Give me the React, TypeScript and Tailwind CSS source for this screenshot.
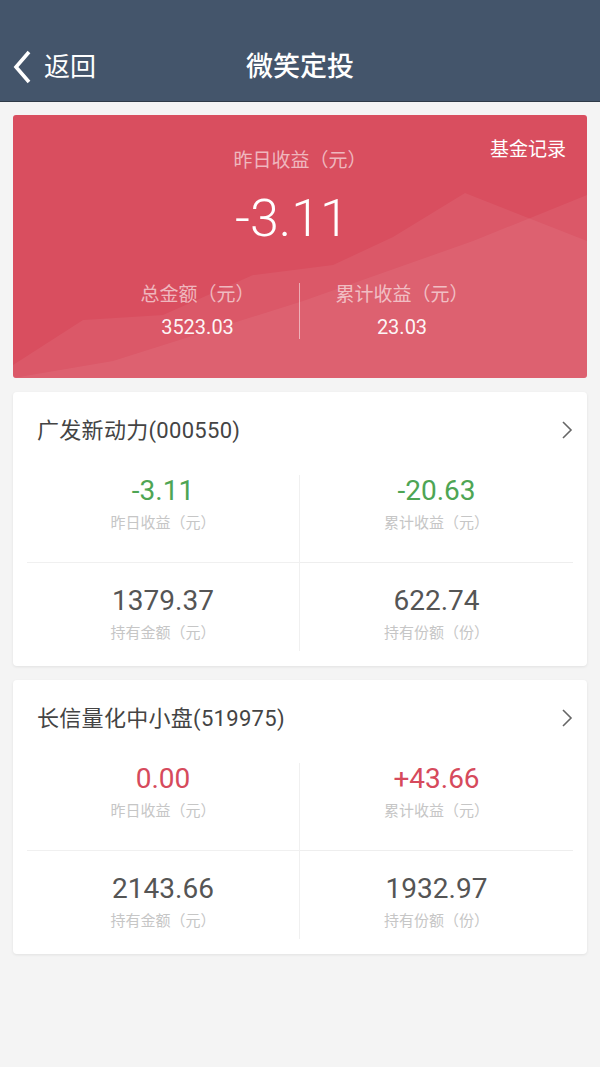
import React from "react";

const font = { fontFamily: '"Roboto", "Noto Sans CJK SC", sans-serif' };

type Cell = { value: string; label: string; color: string };

const funds: { name: string; cells: Cell[] }[] = [
  {
    name: "广发新动力(000550)",
    cells: [
      { value: "-3.11", label: "昨日收益（元）", color: "text-[#4ea554]" },
      { value: "-20.63", label: "累计收益（元）", color: "text-[#4ea554]" },
      { value: "1379.37", label: "持有金额（元）", color: "text-[#555555]" },
      { value: "622.74", label: "持有份额（份）", color: "text-[#555555]" },
    ],
  },
  {
    name: "长信量化中小盘(519975)",
    cells: [
      { value: "0.00", label: "昨日收益（元）", color: "text-[#d64a5c]" },
      { value: "+43.66", label: "累计收益（元）", color: "text-[#d64a5c]" },
      { value: "2143.66", label: "持有金额（元）", color: "text-[#555555]" },
      { value: "1932.97", label: "持有份额（份）", color: "text-[#555555]" },
    ],
  },
];

const FundCard = ({ name, cells }: { name: string; cells: Cell[] }) => (
  <div className="mx-[13px] rounded-[4px] bg-white pb-[15px] shadow-[0_1px_3px_rgba(0,0,0,0.08)]">
    {/* Title */}
    <div className="flex h-[83px] items-center justify-between pb-[7px] pl-[24px] pr-[14px]">
      <span className="text-[22px] tracking-[0.3px] text-[#444444]">{name}</span>
      <svg width="12" height="20" viewBox="0 0 12 20" fill="none">
        <path d="M2 2l8 8-8 8" stroke="#666666" strokeWidth="1.6" />
      </svg>
    </div>

    {/* Grid */}
    <div className="mx-[14px] grid grid-cols-2">
      {cells.map((c, i) => (
        <div
          key={i}
          className={`flex h-[88px] flex-col items-center ${i % 2 === 0 ? "border-r border-[#f0f0f0]" : ""} ${
            i < 2 ? "border-b border-[#eeeeee] pt-0" : "pt-[22px]"
          }`}
        >
          <span className={`text-[28px] leading-[32px] ${c.color}`}>{c.value}</span>
          <span className="mt-[6px] text-[15px] leading-[20px] text-[#c6c6c6]">{c.label}</span>
        </div>
      ))}
    </div>
  </div>
);

export default function App() {
  return (
    <div className="min-h-screen bg-[#f4f4f4]" style={font}>
      {/* Header */}
      <header className="h-[102px] border-b border-[#2f3a48] bg-[#44556b] pt-[45px]">
        <div className="relative flex h-[44px] items-center justify-center">
          <div className="absolute left-[13px] flex items-center">
            <svg width="20" height="34" viewBox="0 0 20 34" fill="none">
              <path d="M16 2L3 17l13 15" stroke="white" strokeWidth="3.6" />
            </svg>
            <span className="ml-[11px] text-[26px] text-white">返回</span>
          </div>
          <span className="text-[27px] font-medium text-white">微笑定投</span>
        </div>
      </header>

      {/* Summary card */}
      <div className="relative mx-[13px] mt-[13px] h-[263px] overflow-hidden rounded-[3px] bg-[#d94e5f]">
        <svg className="absolute inset-0" width="574" height="263" viewBox="0 0 574 263" preserveAspectRatio="none">
          <path
            d="M0 263 L0 250 L70 205 L150 200 L240 160 L320 150 L380 122 L452 78 L574 126 L574 263 Z"
            fill="white"
            fillOpacity="0.06"
          />
          <path
            d="M0 263 L100 246 L290 186 L460 126 L574 80 L574 263 Z"
            fill="white"
            fillOpacity="0.06"
          />
        </svg>

        <span className="absolute right-[21px] top-[23px] text-[19px] leading-[24px] text-white">基金记录</span>

        <div className="relative flex flex-col items-center pt-[34px]">
          <span className="text-[19px] leading-[24px] text-white/60">昨日收益（元）</span>
          <span className="mt-[18px] pr-[16px] text-[52px] font-light leading-[56px] text-white">-3.11</span>
          <div className="mt-[36px] grid w-[408px] grid-cols-2">
            <div className="flex flex-col items-center border-r border-white/50">
              <span className="text-[19px] leading-[24px] text-white/60">总金额（元）</span>
              <span className="mt-[8px] text-[20px] leading-[24px] text-white/95">3523.03</span>
            </div>
            <div className="flex flex-col items-center">
              <span className="text-[19px] leading-[24px] text-white/60">累计收益（元）</span>
              <span className="mt-[8px] text-[20px] leading-[24px] text-white/95">23.03</span>
            </div>
          </div>
        </div>
      </div>

      <div className="mt-[14px] flex flex-col gap-[14px]">
        {funds.map((f) => (
          <FundCard key={f.name} name={f.name} cells={f.cells} />
        ))}
      </div>
    </div>
  );
}
